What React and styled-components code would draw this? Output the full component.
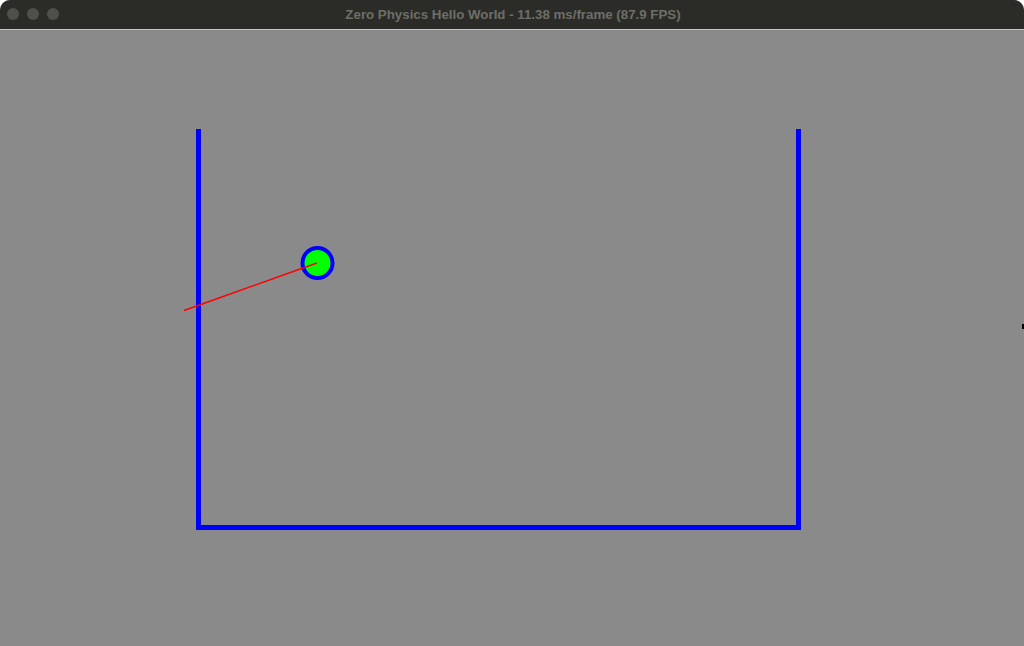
import React from "react";
import styled, { createGlobalStyle } from "styled-components";

const GlobalStyle = createGlobalStyle`
  html, body {
    margin: 0;
    padding: 0;
    background: #ffffff;
  }
  #root {
    width: 1024px;
    height: 646px;
  }
`;

const Window = styled.div`
  display: flex;
  flex-direction: column;
  width: 1024px;
  height: 646px;
  overflow: hidden;
  border-radius: 10px 10px 0 0;
  background: #8a8a8a;
`;

const TitleBar = styled.div`
  position: relative;
  display: flex;
  align-items: center;
  justify-content: center;
  height: 29px;
  flex-shrink: 0;
  background: #2b2c27;
  border-bottom: 1px solid #c8c8c8;
`;

const Lights = styled.div`
  position: absolute;
  left: 7px;
  top: 8px;
  display: flex;
  gap: 8px;
`;

const Light = styled.span`
  width: 12px;
  height: 12px;
  border-radius: 50%;
  background: #4f504c;
`;

const Title = styled.div`
  font-family: "Liberation Sans", Arial, sans-serif;
  font-size: 13.3px;
  font-weight: bold;
  color: #6e6e69;
  margin-left: 2px;
`;

const Canvas = styled.div`
  flex: 1;
  display: flex;
  background: #8a8a8a;
`;

function Scene() {
  return (
    <svg width="1024" height="616" viewBox="0 30 1024 616">
      <polyline
        points="198.5,129 198.5,527.5 798.5,527.5 798.5,129"
        fill="none"
        stroke="#0000ff"
        strokeWidth="5"
        strokeLinejoin="miter"
      />
      <circle cx="317.5" cy="263" r="15" fill="#00ff00" stroke="#0000ff" strokeWidth="4" />
      <line x1="184" y1="310.5" x2="317" y2="263" stroke="#ff0000" strokeWidth="1.5" />
      <rect x="1022" y="324" width="2" height="5" fill="#000000" />
    </svg>
  );
}

export default function App() {
  return (
    <>
      <GlobalStyle />
      <Window>
        <TitleBar>
          <Lights>
            <Light />
            <Light />
            <Light />
          </Lights>
          <Title>Zero Physics Hello World - 11.38 ms/frame (87.9 FPS)</Title>
        </TitleBar>
        <Canvas>
          <Scene />
        </Canvas>
      </Window>
    </>
  );
}
